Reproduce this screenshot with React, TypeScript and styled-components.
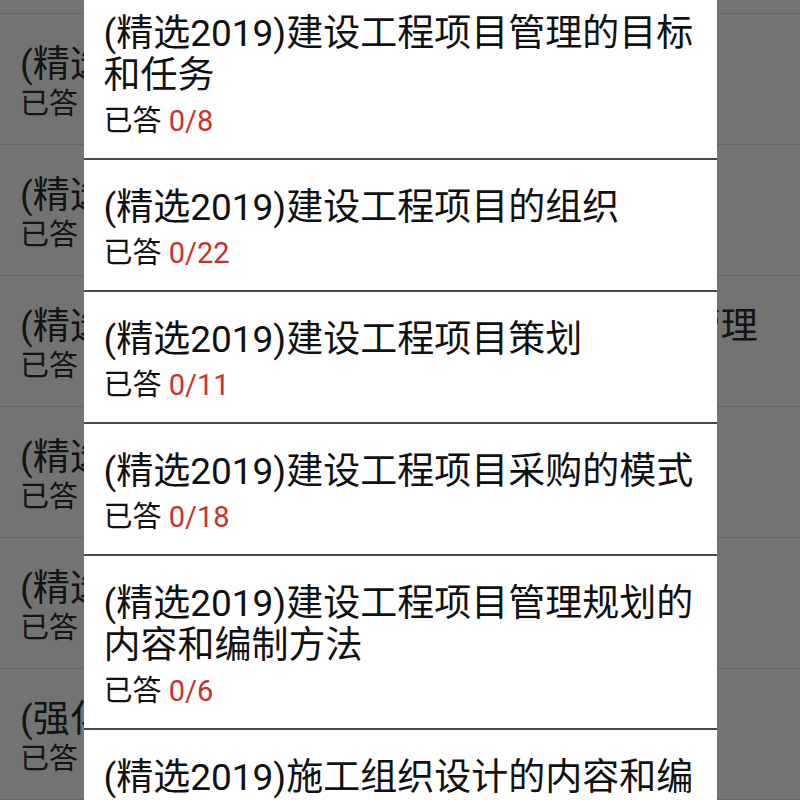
import { useLayoutEffect, useRef } from 'react'
import styled, { createGlobalStyle } from 'styled-components'

interface Chapter {
  title: string
  answered: number
  total: number
}

const backgroundChapters: Chapter[] = [
  { title: '(精选2019)建设工程监理规范', answered: 0, total: 9 },
  { title: '(精选2019)建设工程监理的基本概念', answered: 0, total: 8 },
  { title: '(精选2019)建设工程监理的相关制度', answered: 0, total: 22 },
  { title: '(精选2019)建设工程项目组织协调与项目管理', answered: 0, total: 11 },
  { title: '(精选2019)建设工程监理合同管理', answered: 0, total: 18 },
  { title: '(精选2019)建设工程监理文件资料', answered: 0, total: 6 },
  { title: '(强化2019)建设工程监理规划', answered: 0, total: 12 }
]

const dialogChapters: Chapter[] = [
  { title: '(精选2019)建设工程项目管理的目标和任务', answered: 0, total: 8 },
  { title: '(精选2019)建设工程项目的组织', answered: 0, total: 22 },
  { title: '(精选2019)建设工程项目策划', answered: 0, total: 11 },
  { title: '(精选2019)建设工程项目采购的模式', answered: 0, total: 18 },
  { title: '(精选2019)建设工程项目管理规划的内容和编制方法', answered: 0, total: 6 },
  { title: '(精选2019)施工组织设计的内容和编制方法', answered: 0, total: 10 }
]

export default function App() {
  const pageRef = useRef<HTMLDivElement>(null)
  const listRef = useRef<HTMLDivElement>(null)

  // both lists are shown part way scrolled
  useLayoutEffect(() => {
    if (pageRef.current) pageRef.current.scrollTop = 118
    if (listRef.current) listRef.current.scrollTop = 14
  }, [])

  return (
    <>
      <GlobalStyle />
      <Screen>
        <Page ref={pageRef}>
          {backgroundChapters.map((c) => (
            <PageRow key={c.title}>
              <ItemTitle>{c.title}</ItemTitle>
              <ItemMeta $gap={0}>
                已答 <Count>{c.answered}/{c.total}</Count>
              </ItemMeta>
            </PageRow>
          ))}
        </Page>
        <Overlay>
          <Dialog ref={listRef}>
            {dialogChapters.map((c) => (
              <DialogRow key={c.title}>
                <ItemTitle>{c.title}</ItemTitle>
                <ItemMeta $gap={6}>
                  已答 <Count>{c.answered}/{c.total}</Count>
                </ItemMeta>
              </DialogRow>
            ))}
          </Dialog>
        </Overlay>
      </Screen>
    </>
  )
}

const GlobalStyle = createGlobalStyle`
  html, body {
    margin: 0;
    padding: 0;
  }

  body {
    font-family: Roboto, 'Noto Sans CJK SC', sans-serif;
    color: #111;
  }
`

const Screen = styled.div`
  position: relative;
  width: 800px;
  height: 800px;
  overflow: hidden;
  background: #fff;
`

const Page = styled.div`
  height: 100%;
  overflow: hidden;
`

const PageRow = styled.div`
  padding: 30px 20px 22px;
  border-bottom: 1px solid #dedede;
  color: #2e2e2e;
`

const ItemTitle = styled.div`
  font-size: 37px;
  line-height: 42px;
`

const ItemMeta = styled.div<{ $gap: number }>`
  margin-top: ${({ $gap }) => $gap}px;
  font-size: 29px;
  line-height: 36px;
`

const Count = styled.span`
  color: #c8322e;
`

const Overlay = styled.div`
  position: absolute;
  inset: 0;
  display: flex;
  justify-content: center;
  background: rgba(0, 0, 0, 0.55);
`

const Dialog = styled.div`
  width: 633px;
  height: 100%;
  overflow: hidden;
  background: #fff;
`

const DialogRow = styled.div`
  padding: 27px 20px 19px;
  border-bottom: 2px solid #4a4a4a;
`
